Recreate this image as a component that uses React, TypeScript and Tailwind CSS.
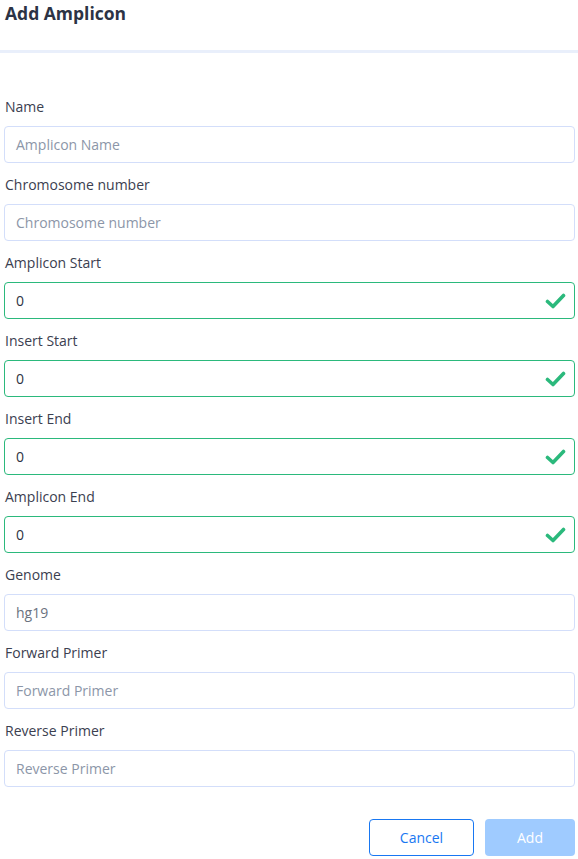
import React from "react";

const Check = () => (
  <svg width="21" height="16" viewBox="0 0 21 16" className="absolute right-[9px] top-1/2 -translate-y-1/2">
    <path d="M2.5 8.5 L8 13.5 L18.5 2.5" fill="none" stroke="#2bb97c" strokeWidth="3.6" strokeLinecap="round" strokeLinejoin="round" />
  </svg>
);

type F = { label: string; placeholder?: string; value?: string; valid?: boolean };

const fields: F[] = [
  { label: "Name", placeholder: "Amplicon Name" },
  { label: "Chromosome number", placeholder: "Chromosome number" },
  { label: "Amplicon Start", value: "0", valid: true },
  { label: "Insert Start", value: "0", valid: true },
  { label: "Insert End", value: "0", valid: true },
  { label: "Amplicon End", value: "0", valid: true },
  { label: "Genome", value: "hg19" },
  { label: "Forward Primer", placeholder: "Forward Primer" },
  { label: "Reverse Primer", placeholder: "Reverse Primer" },
];

export default function App() {
  return (
    <div className="w-[578px] h-[859px] bg-white overflow-hidden" style={{ fontFamily: '"Open Sans", "Liberation Sans", sans-serif' }}>
      <div className="h-[53px] pl-[5px] border-b-[3px] border-[#e9effb]">
        <h1 className="text-[17.5px] leading-[26px] font-bold text-[#2c3345]">Add Amplicon</h1>
      </div>
      <div className="pl-[4px] pr-[3px] pt-[44px]">
        {fields.map((f) => (
          <div key={f.label} className="mb-[12px]">
            <div className="h-[20px] leading-[20px] text-[14px] text-[#3b4050] pl-[1px] mb-[9px]">{f.label}</div>
            <div className="relative">
              <div
                className={`h-[37px] rounded-[4px] border flex items-center pl-[11px] text-[14px] ${
                  f.valid ? "border-[#2bb97c]" : "border-[#d3defa]"
                } ${f.value === "hg19" ? "text-[#6b7280]" : f.value ? "text-[#2d3343]" : "text-[#8c96a8]"}`}
              >
                {f.value ?? f.placeholder}
              </div>
              {f.valid && <Check />}
            </div>
          </div>
        ))}
        <div className="flex justify-end gap-[11px] mt-[20px] pt-[12px]">
          <button className="w-[105px] h-[37px] rounded-[4px] border border-[#1877f2] text-[#1877f2] text-[14px] bg-white">Cancel</button>
          <button className="w-[90px] h-[37px] rounded-[4px] bg-[#9fcbff] text-white text-[14px]">Add</button>
        </div>
      </div>
    </div>
  );
}
